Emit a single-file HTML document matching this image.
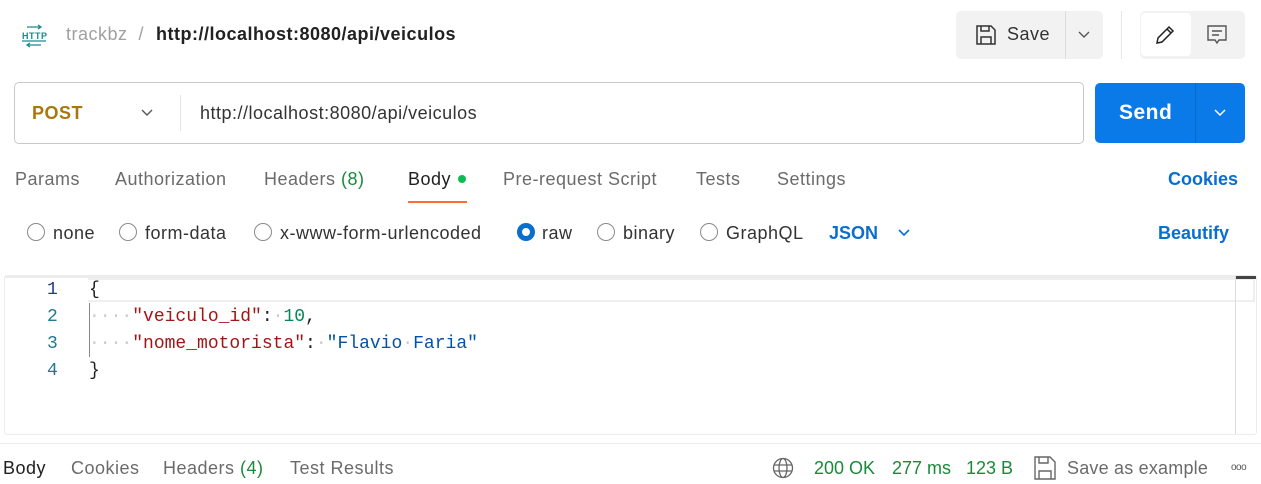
<!DOCTYPE html>
<html><head><meta charset="utf-8"><style>
*{box-sizing:border-box;margin:0;padding:0}
body{width:1261px;height:484px;background:#fff;font-family:"Liberation Sans",sans-serif;color:#212121;position:relative;overflow:hidden;font-size:17px;letter-spacing:0.5px}
.a{position:absolute;white-space:nowrap}
.g{color:#6b6b6b}
.mono{font-family:"Liberation Mono",monospace;font-size:18px;letter-spacing:0}
.radio{position:absolute;width:18px;height:18px;border:1.5px solid #8a8a8a;border-radius:50%}
</style></head><body>
<svg class="a" style="left:21px;top:24px" width="26" height="24" viewBox="0 0 26 24" fill="none" stroke="#1a8a8f" stroke-width="1.3"><path d="M6 3h14M17 1l3 2-3 2"/><path d="M20 21H6M9 19l-3 2 3 2"/><text x="1" y="15" font-family="Liberation Sans" font-size="9" fill="#1a8a8f" stroke="none" font-weight="bold">HTTP</text><path d="M1 17h24"/></svg>
<div class="a" style="left:66px;top:24px;font-size:18px;color:#a0a0a0">trackbz&nbsp;&nbsp;/</div>
<div class="a" style="left:156px;top:24px;font-size:18px;font-weight:bold;color:#212121">http://localhost:8080/api/veiculos</div>
<div class="a" style="left:956px;top:11px;width:147px;height:48px;background:#f2f2f2;border-radius:5px"></div>
<div class="a" style="left:1065px;top:11px;width:1px;height:48px;background:#ddd"></div>
<svg class="a" style="left:975px;top:24px" width="22" height="22" viewBox="0 0 22 22" fill="none" stroke="#333" stroke-width="1.5"><path d="M2 2h14l4 4v14H2z"/><path d="M6 2v5h8V2M6 20v-7h10v7"/></svg>
<div class="a" style="left:1007px;top:24px;font-size:18px;color:#333">Save</div>
<svg class="a" style="left:1077px;top:30px" width="14" height="10"><path d="M2 2l5 5 5-5" fill="none" stroke="#555" stroke-width="1.4"/></svg>
<div class="a" style="left:1121px;top:11px;width:1px;height:48px;background:#e6e6e6"></div>
<div class="a" style="left:1140px;top:11px;width:105px;height:48px;background:#f2f2f2;border-radius:5px"></div>
<div class="a" style="left:1141px;top:13px;width:50px;height:43px;background:#fff;border-radius:4px"></div>
<svg class="a" style="left:1154px;top:24px" width="22" height="22" viewBox="0 0 22 22" fill="none" stroke="#222" stroke-width="1.5"><path d="M3 19l1-5L15 3l4 4L8 18z M13 5l4 4"/></svg>
<svg class="a" style="left:1206px;top:24px" width="22" height="22" viewBox="0 0 22 22" fill="none" stroke="#555" stroke-width="1.4"><path d="M2 2h18v14H13l-2 3-2-3H2z M6 7h10M6 11h7"/></svg>
<div class="a" style="left:14px;top:82px;width:1070px;height:62px;border:1px solid #c8c8c8;border-radius:5px"></div>
<div class="a" style="left:180px;top:95px;width:1px;height:36px;background:#e4e4e4"></div>
<div class="a" style="left:32px;top:103px;font-size:18px;font-weight:bold;color:#a8780a">POST</div>
<svg class="a" style="left:140px;top:108px" width="14" height="10"><path d="M2 2l5 5 5-5" fill="none" stroke="#555" stroke-width="1.4"/></svg>
<div class="a" style="left:200px;top:103px;font-size:18px;color:#333">http://localhost:8080/api/veiculos</div>
<div class="a" style="left:1095px;top:83px;width:150px;height:60px;background:#0a7ae8;border-radius:5px"></div>
<div class="a" style="left:1195px;top:83px;width:1px;height:60px;background:#0868c8"></div>
<div class="a" style="left:1119px;top:101px;font-size:21px;font-weight:bold;color:#fff">Send</div>
<svg class="a" style="left:1213px;top:108px" width="14" height="10"><path d="M2 2l5 5 5-5" fill="none" stroke="#fff" stroke-width="1.5"/></svg>
<div class="a g" style="left:15px;top:169px;font-size:18px">Params</div>
<div class="a g" style="left:115px;top:169px;font-size:18px">Authorization</div>
<div class="a g" style="left:264px;top:169px;font-size:18px">Headers <span style="color:#1a8a3a">(8)</span></div>
<div class="a" style="left:408px;top:169px;font-size:18px;color:#212121">Body</div>
<div class="a" style="left:458px;top:175px;width:8px;height:8px;border-radius:50%;background:#0cbb52"></div>
<div class="a" style="left:408px;top:201px;width:59px;height:2px;background:#ff6c37"></div>
<div class="a g" style="left:503px;top:169px;font-size:18px">Pre-request Script</div>
<div class="a g" style="left:696px;top:169px;font-size:18px">Tests</div>
<div class="a g" style="left:777px;top:169px;font-size:18px">Settings</div>
<div class="a" style="left:1168px;top:169px;font-size:18px;font-weight:bold;color:#0a6ed1;letter-spacing:0">Cookies</div>
<div class="radio" style="left:27px;top:223px"></div><div class="a" style="left:53px;top:223px;font-size:18px;color:#333">none</div>
<div class="radio" style="left:119px;top:223px"></div><div class="a" style="left:145px;top:223px;font-size:18px;color:#333">form-data</div>
<div class="radio" style="left:254px;top:223px"></div><div class="a" style="left:280px;top:223px;font-size:18px;color:#333">x-www-form-urlencoded</div>
<div class="radio" style="left:517px;top:223px;border:5px solid #0a6ed1"></div><div class="a" style="left:542px;top:223px;font-size:18px;color:#333">raw</div>
<div class="radio" style="left:597px;top:223px"></div><div class="a" style="left:623px;top:223px;font-size:18px;color:#333">binary</div>
<div class="radio" style="left:700px;top:223px"></div><div class="a" style="left:726px;top:223px;font-size:18px;color:#333">GraphQL</div>
<div class="a" style="left:829px;top:223px;font-size:18px;font-weight:bold;color:#0a6ed1;letter-spacing:0">JSON</div>
<svg class="a" style="left:897px;top:228px" width="14" height="10"><path d="M2 2l5 5 5-5" fill="none" stroke="#0a6ed1" stroke-width="1.6"/></svg>
<div class="a" style="left:1158px;top:223px;font-size:18px;font-weight:bold;color:#0a6ed1;letter-spacing:0">Beautify</div>
<div class="a" style="left:4px;top:275px;width:1253px;height:160px;border:1px solid #ececec;border-top:3px solid #ececec;border-radius:3px"></div>
<div class="a" style="left:88px;top:278px;width:1167px;height:24px;border:2px solid #efefef;border-left:none"></div>
<div class="a" style="left:1235px;top:276px;width:1px;height:158px;background:#ddd"></div>
<div class="a" style="left:1236px;top:276px;width:20px;height:3px;background:#444"></div>
<div class="a" style="left:89px;top:303px;width:1px;height:54px;background:#888"></div>
<div class="a mono" style="left:47px;top:280px;color:#1a3a8a">1</div>
<div class="a mono" style="left:47px;top:307px;color:#237893">2</div>
<div class="a mono" style="left:47px;top:334px;color:#237893">3</div>
<div class="a mono" style="left:47px;top:361px;color:#237893">4</div>
<div class="a mono" style="left:89px;top:280px;color:#222">{</div>
<div class="a mono" style="left:89px;top:307px"><span style="color:#ccc">····</span><span style="color:#a31515">"veiculo_id"</span>:<span style="color:#ccc">·</span><span style="color:#098658">10</span>,</div>
<div class="a mono" style="left:89px;top:334px"><span style="color:#ccc">····</span><span style="color:#a31515">"nome_motorista"</span>:<span style="color:#ccc">·</span><span style="color:#0451a5">"Flavio<span style="color:#ccc">·</span>Faria"</span></div>
<div class="a mono" style="left:89px;top:361px;color:#222">}</div>
<div class="a" style="left:0;top:443px;width:1261px;height:1px;background:#ececec"></div>
<div class="a" style="left:3px;top:458px;font-size:18px;color:#212121">Body</div>
<div class="a g" style="left:71px;top:458px;font-size:18px">Cookies</div>
<div class="a g" style="left:163px;top:458px;font-size:18px">Headers <span style="color:#1a8a3a">(4)</span></div>
<div class="a g" style="left:290px;top:458px;font-size:18px">Test Results</div>
<svg class="a" style="left:772px;top:457px" width="22" height="22" viewBox="0 0 22 22" fill="none" stroke="#666" stroke-width="1.3"><circle cx="11" cy="11" r="9.5"/><ellipse cx="11" cy="11" rx="4" ry="9.5"/><path d="M2 8h18M2 14h18"/></svg>
<div class="a" style="left:814px;top:458px;font-size:18px;color:#1a8a3a;letter-spacing:0">200 OK</div>
<div class="a" style="left:892px;top:458px;font-size:18px;color:#1a8a3a;letter-spacing:0">277 ms</div>
<div class="a" style="left:966px;top:458px;font-size:18px;color:#1a8a3a;letter-spacing:0">123 B</div>
<svg class="a" style="left:1034px;top:456px" width="22" height="24" viewBox="0 0 22 24" fill="none" stroke="#666" stroke-width="1.4"><path d="M1 1h15l5 5v17H1z"/><path d="M5 1v6h9V1M5 23v-8h12v8"/></svg>
<div class="a" style="left:1067px;top:458px;font-size:18px;color:#6b6b6b;letter-spacing:0.2px">Save as example</div>
<div class="a" style="left:1231px;top:462px;font-size:10px;color:#555;letter-spacing:-0.5px">ooo</div>
</body></html>
